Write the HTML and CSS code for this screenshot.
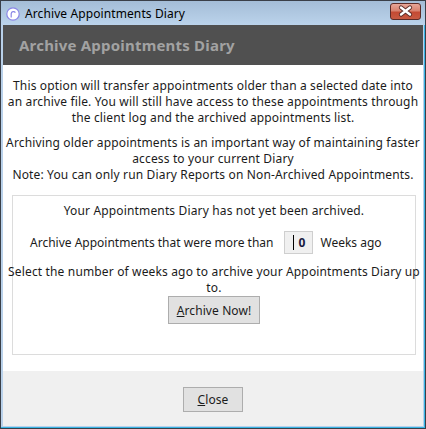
FILE: index.html
```html
<!DOCTYPE html>
<html>
<head>
<meta charset="utf-8">
<title>Archive Appointments Diary</title>
<link rel="stylesheet" href="styles.css">
</head>
<body>
<div class="window">
  <div class="titlebar">
    <svg class="app-icon" width="14" height="14" viewBox="0 0 14 14">
      <circle cx="7" cy="7" r="6.2" fill="#ffffff" stroke="#8a86e6" stroke-width="1.2"/>
      <path d="M5.2 10.5 V6.6 A2.3 2.3 0 0 1 9.4 5.6" fill="none" stroke="#8a86e6" stroke-width="1.2"/>
    </svg>
    <span class="title-text">Archive Appointments Diary</span>
    <div class="close-x">
      <svg width="29" height="15" viewBox="0 0 29 15">
        <path d="M10 3.5 L19 10.5 M19 3.5 L10 10.5" stroke="#5a2c28" stroke-width="4.2" stroke-linecap="round"/>
        <path d="M10 3.5 L19 10.5 M19 3.5 L10 10.5" stroke="#ffffff" stroke-width="2.4" stroke-linecap="round"/>
      </svg>
    </div>
  </div>
  <div class="client">
    <div class="header">Archive Appointments Diary</div>
    <div class="content">
      <p class="para first">This option will transfer appointments older than a selected date into<br>an archive file. You will still have access to these appointments through<br>the client log and the archived appointments list.</p>
      <p class="para">Archiving older appointments is an important way of maintaining faster<br>access to your current Diary</p>
      <p class="para">Note: You can only run Diary Reports on Non-Archived Appointments.</p>
      <div class="panel">
        <div class="status">Your Appointments Diary has not yet been archived.</div>
        <div class="weeks-row">
          <span class="label">Archive Appointments that were more than</span>
          <span class="num-input"><span class="caret"></span>0</span>
          <span class="label after">Weeks ago</span>
        </div>
        <div class="hint">Select the number of weeks ago to archive your Appointments Diary up<br>to.</div>
        <button class="btn archive-btn"><u>A</u>rchive Now!</button>
      </div>
    </div>
    <div class="footer">
      <button class="btn close-btn"><u>C</u>lose</button>
    </div>
  </div>
</div>
</body>
</html>
```
FILE: styles.css
```css
html, body {
  margin: 0;
  padding: 0;
  background: #ffffff;
}

body {
  font-family: "Noto Sans", "Open Sans", sans-serif;
  font-size: 12px;
  letter-spacing: 0.15px;
  color: #1b1b1b;
}

.window {
  width: 426px;
  height: 429px;
  box-sizing: border-box;
  border: 1px solid #3a3f48;
  background: #b9d1ea;
  padding: 0 2px 2px 2px;
  display: flex;
  flex-direction: column;
  box-shadow: inset -1px -1px 0 #38b4e4;
}

.titlebar {
  height: 24px;
  margin: 0 -2px;
  padding: 0 4px 0 5px;
  display: flex;
  align-items: center;
  background: linear-gradient(#a4bdd7, #bbd3eb);
  flex: none;
}

.app-icon {
  flex: none;
  margin-top: 1px;
}

.title-text {
  margin-left: 5px;
  font-size: 12px;
  letter-spacing: 0.1px;
  color: #000000;
  margin-top: 1px;
}

.close-x {
  margin-left: auto;
  width: 31px;
  height: 17px;
  box-sizing: border-box;
  border: 1px solid #5d2b27;
  border-radius: 3px;
  background: linear-gradient(#e7a698 0%, #d8826f 45%, #c44a33 55%, #c85a42 100%);
  display: flex;
  align-items: center;
  justify-content: center;
  margin-top: -3px;
}

.close-x svg {
  display: block;
}

.client {
  flex: 1;
  display: flex;
  flex-direction: column;
  background: #ffffff;
}

.header {
  height: 40px;
  flex: none;
  background: #505050;
  color: #a2a2a2;
  font-weight: bold;
  font-size: 15px;
  letter-spacing: 0.2px;
  display: flex;
  align-items: center;
  padding-left: 16px;
}

.content {
  height: 306px;
  flex: none;
  box-sizing: border-box;
  padding-top: 13px;
  text-align: center;
  background: #ffffff;
}

.para {
  margin: 0;
  line-height: 16px;
  white-space: nowrap;
}

.para.first {
  margin-bottom: 9px;
}

.panel {
  margin: 12px 7px 0 9px;
  height: 160px;
  box-sizing: border-box;
  border: 1px solid #dcdcdc;
  padding-top: 7px;
  display: flex;
  flex-direction: column;
  align-items: center;
}

.status {
  line-height: 16px;
}

.weeks-row {
  margin-top: 12px;
  height: 23px;
  align-self: stretch;
  display: flex;
  align-items: center;
  padding-left: 17px;
  white-space: nowrap;
}

.label {
  letter-spacing: 0;
}

.num-input {
  width: 29px;
  height: 23px;
  flex: none;
  box-sizing: border-box;
  border: 1px solid #cfcfcf;
  background: #f0f0f0;
  margin-left: 10px;
  display: flex;
  align-items: center;
  justify-content: flex-end;
  padding-right: 6px;
  font-weight: bold;
  color: #1a1a40;
}

.caret {
  width: 1px;
  height: 15px;
  background: #000000;
  margin-right: 4px;
}

.label.after {
  margin-left: 8px;
}

.hint {
  margin: 10px -6px 0 -6px;
  line-height: 16px;
  white-space: nowrap;
  align-self: stretch;
  text-align: center;
}

.btn {
  font-family: "Noto Sans", "Open Sans", sans-serif;
  font-size: 12px;
  letter-spacing: 0.1px;
  color: #1b1b1b;
  background: #e1e1e1;
  border: 1px solid #adadad;
  border-radius: 0;
  padding: 0;
  margin: 0;
}

.archive-btn {
  width: 92px;
  height: 28px;
}

.footer {
  flex: 1;
  background: #f0f0f0;
  display: flex;
  justify-content: center;
  align-items: flex-start;
  padding-top: 16px;
}

.close-btn {
  width: 60px;
  height: 25px;
}
```
